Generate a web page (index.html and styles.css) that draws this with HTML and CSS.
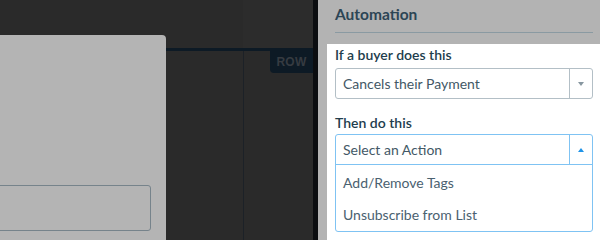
FILE: index.html
```html
<!DOCTYPE html>
<html>
<head>
<meta charset="utf-8">
<link rel="stylesheet" href="styles.css">
</head>
<body>
<div class="app">
  <div class="canvas">
    <div class="topbar-a"></div>
    <div class="topbar-b"></div>
    <div class="card">
      <div class="card-input"></div>
    </div>
    <div class="navline"></div>
    <div class="col-mid"></div>
    <div class="col-right">
      <div class="badge">ROW</div>
    </div>
  </div>
  <div class="edge"></div>
  <aside class="panel">
    <h2 class="panel-title">Automation</h2>
    <div class="spot">
      <label class="field-label first">If a buyer does this</label>
      <div class="select">
        <span class="select-value">Cancels their Payment</span>
        <span class="select-caret"><span class="tri down"></span></span>
      </div>
      <label class="field-label second">Then do this</label>
      <div class="select open">
        <div class="select-head">
          <span class="select-value">Select an Action</span>
          <span class="select-caret"><span class="tri up"></span></span>
        </div>
        <ul class="options">
          <li>Add/Remove Tags</li>
          <li>Unsubscribe from List</li>
        </ul>
      </div>
    </div>
  </aside>
</div>
</body>
</html>
```
FILE: styles.css
```css
* { box-sizing: border-box; }
html, body { margin: 0; padding: 0; }
body {
  width: 600px;
  height: 240px;
  overflow: hidden;
  font-family: "Lato", "Liberation Sans", sans-serif;
  background: #2a2a2a;
}
.app {
  display: flex;
  height: 240px;
}
.canvas {
  width: 313px;
  flex: none;
  display: grid;
  grid-template-columns: 166px 77px 70px;
  grid-template-rows: 35px 13px 3px 1fr;
  background: #2a2a2a;
}
.topbar-a { grid-column: 1 / 3; grid-row: 1 / 3; }
.topbar-b { grid-column: 3; grid-row: 1 / 3; background: #2c2c2c; }
.card {
  grid-column: 1;
  grid-row: 2 / 5;
  background: #b4b4b4;
  border-top-right-radius: 4px;
  padding: 150px 15px 0 0;
}
.card-input {
  height: 46px;
  margin-left: -4px;
  border: 1.5px solid #76838b;
  border-radius: 3px;
}
.navline {
  grid-column: 2 / 4;
  grid-row: 3;
  background: #0d1a25;
}
.col-mid { grid-column: 2; grid-row: 4; }
.col-right {
  grid-column: 3;
  grid-row: 4;
  border-left: 1px solid #1c2127;
  display: flex;
  justify-content: flex-end;
  align-items: flex-start;
}
.badge {
  width: 43px;
  height: 22px;
  background: #0d1a25;
  border-bottom-left-radius: 4px;
  color: #363b41;
  font-family: "Liberation Sans", sans-serif;
  font-weight: bold;
  font-size: 12px;
  line-height: 22px;
  text-align: center;
  letter-spacing: 0.3px;
}
.edge {
  width: 5px;
  flex: none;
  background: #0b0d10;
}
.panel {
  flex: 1;
  background: #b3b3b3;
  display: flex;
  flex-direction: column;
}
.panel-title {
  margin: 0 7px 0 17px;
  height: 33px;
  border-bottom: 1px solid #8a9aa2;
  font-size: 15.5px;
  font-weight: 700;
  color: #2c4555;
  padding-top: 5px;
  line-height: 18px;
}
.spot {
  margin: 11px 0 0 9px;
  flex: 1;
  background: #ffffff;
  padding: 0 7px 0 8px;
  display: flex;
  flex-direction: column;
}
.field-label {
  display: block;
  font-size: 14px;
  font-weight: 600;
  color: #223d4d;
  line-height: 20px;
  height: 20px;
}
.field-label.first { margin: 1px 0 3px; }
.field-label.second { margin: 14px 0 1px; }
.select {
  border: 1px solid #b3bfc6;
  border-radius: 3px;
  height: 31px;
  display: flex;
  color: #435866;
  font-size: 14px;
}
.select-value {
  flex: 1;
  padding-left: 7px;
  line-height: 29px;
}
.select-caret {
  width: 23px;
  flex: none;
  border-left: 1px solid #b3bfc6;
  display: flex;
  align-items: center;
  justify-content: center;
}
.tri {
  width: 0;
  height: 0;
  border-left: 3.5px solid transparent;
  border-right: 3.5px solid transparent;
}
.tri.down { border-top: 4px solid #8796a0; }
.tri.up { border-bottom: 4px solid #1e93e8; }
.select.open {
  height: auto;
  flex-direction: column;
  border-color: #7fc3f3;
}
.select-head {
  display: flex;
  height: 30px;
  border-bottom: 1px solid #7fc3f3;
}
.select.open .select-caret { border-left-color: #7fc3f3; }
.options {
  list-style: none;
  margin: 0;
  padding: 2px 0 0;
}
.options li {
  height: 32px;
  line-height: 32px;
  padding-left: 7px;
  color: #4a6170;
}
```
